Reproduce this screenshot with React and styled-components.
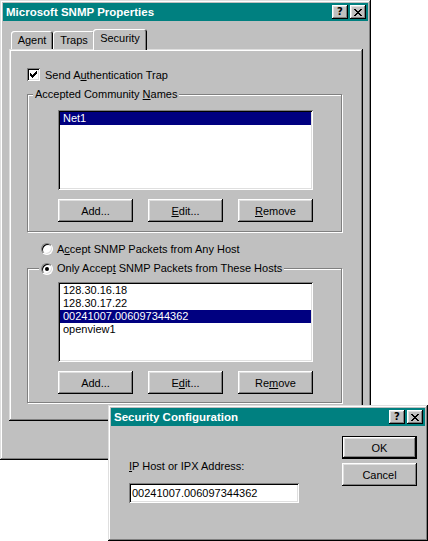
import React from 'react'
import styled, { createGlobalStyle } from 'styled-components'

const GlobalStyle = createGlobalStyle`
html, body {
  margin: 0;
  padding: 0;
  background: #fff;
}
body {
  font-family: "Liberation Sans", Arial, sans-serif;
  font-size: 11px;
  color: #000;
}
`

// win95 bevels
const raised = 'inset -1px -1px #000, inset 1px 1px #fff, inset -2px -2px #808080, inset 2px 2px #dfdfdf'
const frame = 'inset -1px -1px #000, inset 1px 1px #dfdfdf, inset -2px -2px #808080, inset 2px 2px #fff'
const sunken = 'inset 1px 1px #808080, inset -1px -1px #fff, inset 2px 2px #000, inset -2px -2px #dfdfdf'

const Desktop = styled.div`
position: relative;
width: 428px;
height: 541px;
overflow: hidden;
background: #fff;
`
const Window = styled.div`
box-sizing: border-box;
width: ${p => p.$w}px;
height: ${p => p.$h}px;
padding: 3px;
background: #c0c0c0;
box-shadow: ${frame};
display: flex;
flex-direction: column;
`
const Dialog = styled(Window)`
position: absolute;
left: ${p => p.$x}px;
top: ${p => p.$y}px;
z-index: 10;
`
const TitleBar = styled.div`
height: 18px;
flex: none;
display: flex;
align-items: center;
padding: 0 2px 0 3px;
background: #008080;
color: #fff;
font-weight: 700;
font-size: 11.5px;
`
const TitleText = styled.div`
flex: 1;
white-space: nowrap;
`
const TitleButton = styled.div`
width: 16px;
height: 14px;
margin-left: 2px;
background: #c0c0c0;
box-shadow: ${raised};
display: flex;
align-items: center;
justify-content: center;
color: #000;
font-family: "DejaVu Sans", "Liberation Sans", sans-serif;
font-weight: 700;
font-size: 10px;
line-height: 14px;
`
const Body = styled.div`
display: flex;
flex-direction: column;
padding: 8px 5px 0 6px;
`
const TabRow = styled.div`
display: flex;
align-items: flex-end;
height: 20px;
padding-left: 2px;
`
const Tab = styled.div`
box-sizing: border-box;
width: ${p => p.$w}px;
height: ${p => (p.$active ? 21 : 18)}px;
margin: ${p => (p.$active ? '0 -2px -1px -2px' : '0')};
padding-top: 3px;
position: relative;
z-index: ${p => (p.$active ? 2 : 0)};
text-align: center;
background: #c0c0c0;
border-radius: 3px 3px 0 0;
box-shadow: inset 1px 1px #fff, inset -1px 0 #000, inset -2px 0 #808080;
`
const Panel = styled.div`
box-sizing: border-box;
width: 354px;
height: 372px;
padding: 19px 0 0 18px;
background: #c0c0c0;
box-shadow: ${frame};
position: relative;
z-index: 1;
`
const OptionRow = styled.label`
display: flex;
align-items: center;
gap: ${p => p.$gap || 5}px;
height: 13px;
margin: ${p => p.$margin || '0'};
white-space: nowrap;
`
const CheckBox = styled.span`
box-sizing: border-box;
width: 13px;
height: 13px;
flex: none;
background: #fff;
box-shadow: ${sunken};
display: flex;
align-items: center;
justify-content: center;
`
const Radio = styled.span`
box-sizing: border-box;
width: 12px;
height: 12px;
flex: none;
border-radius: 50%;
border: 1px solid;
border-color: #808080 #fff #fff #808080;
background: #fff;
box-shadow: inset 1px 1px #000, inset -1px -1px #dfdfdf;
display: flex;
align-items: center;
justify-content: center;

&::after {
  content: "";
  width: 4px;
  height: 4px;
  border-radius: 50%;
  background: ${p => (p.$on ? '#000' : 'transparent')};
}
`
const Group = styled.fieldset`
box-sizing: border-box;
width: 315px;
margin: ${p => p.$margin || '0'};
padding: 0 0 ${p => p.$bottom}px 0;
border: 1px solid #808080;
box-shadow: inset 1px 1px #fff, 1px 1px #fff;
min-inline-size: 0;
`
const Legend = styled.legend`
margin-left: ${p => p.$indent}px;
padding: 0 2px;
height: 13px;
line-height: 13px;
background: #c0c0c0;
white-space: nowrap;
`
const GroupBody = styled.div`
display: flex;
flex-direction: column;
gap: 9px;
padding: ${p => p.$top}px 0 0 30px;
`
const ListBox = styled.div`
box-sizing: border-box;
width: 255px;
height: 80px;
padding: 2px;
background: #fff;
box-shadow: ${sunken};
`
const ListItem = styled.div`
height: 13px;
line-height: 13px;
padding-left: 3px;
white-space: nowrap;
background: ${p => (p.$selected ? '#000080' : 'transparent')};
color: ${p => (p.$selected ? '#fff' : '#000')};
`
const ButtonRow = styled.div`
display: flex;
gap: 15px;
`
const Button = styled.div`
box-sizing: border-box;
width: 75px;
height: 23px;
display: flex;
align-items: center;
justify-content: center;
background: #c0c0c0;
box-shadow: ${p => (p.$default
    ? 'inset 0 0 0 1px #000, inset -2px -2px #000, inset 2px 2px #fff, inset -3px -3px #808080, inset 3px 3px #dfdfdf'
    : raised)};
white-space: nowrap;
`
const Key = styled.u`
text-decoration: underline;
text-underline-offset: 1px;
`
const ConfigBody = styled.div`
display: flex;
padding: 10px 8px 0 18px;
`
const FieldColumn = styled.div`
flex: 1;
display: flex;
flex-direction: column;
padding-top: 24px;
`
const FieldLabel = styled.div`
height: 13px;
line-height: 13px;
`
const TextField = styled.div`
box-sizing: border-box;
width: 170px;
height: 20px;
margin-top: 10px;
padding-left: 3px;
line-height: 20px;
background: #fff;
box-shadow: ${sunken};
`
const ButtonColumn = styled.div`
display: flex;
flex-direction: column;
gap: 4px;
`

const CloseIcon = () => (
  <svg width="8" height="7" viewBox="0 0 8 7" shapeRendering="crispEdges">
    <path d="M0 0h2v1h1v1h2V1h1V0h2v1H7v1H6v1H5v1h1v1h1v1h1v1H6V6H5V5H3v1H2v1H0V6h1V5h1V4h1V3H2V2H1V1H0z" fill="#000" />
  </svg>
)

const CheckMark = () => (
  <svg width="7" height="7" viewBox="0 0 7 7" shapeRendering="crispEdges">
    <path d="M6 0h1v3H6v1H5v1H4v1H3v1H2V6H1V5H0V2h1v1h1v1h1V3h1V2h1V1h1z" fill="#000" />
  </svg>
)

const TitleButtons = () => (
  <>
    <TitleButton>?</TitleButton>
    <TitleButton><CloseIcon /></TitleButton>
  </>
)

const hosts = ['128.30.16.18', '128.30.17.22', '00241007.006097344362', 'openview1']

export default function App() {
  return (
    <Desktop>
      <GlobalStyle />
      <Window $w={371} $h={460}>
        <TitleBar>
          <TitleText>Microsoft SNMP Properties</TitleText>
          <TitleButtons />
        </TitleBar>
        <Body>
          <TabRow>
            <Tab $w={42}>Agent</Tab>
            <Tab $w={42}>Traps</Tab>
            <Tab $w={54} $active>Security</Tab>
          </TabRow>
          <Panel>
            <OptionRow>
              <CheckBox><CheckMark /></CheckBox>
              <span>Send A<Key>u</Key>thentication Trap</span>
            </OptionRow>

            <Group $margin="7px 0 0 0" $bottom={9}>
              <Legend $indent={5}>Accepted Community <Key>N</Key>ames</Legend>
              <GroupBody $top={9}>
                <ListBox>
                  <ListItem $selected>Net1</ListItem>
                </ListBox>
                <ButtonRow>
                  <Button>Add...</Button>
                  <Button><span><Key>E</Key>dit...</span></Button>
                  <Button><span><Key>R</Key>emove</span></Button>
                </ButtonRow>
              </GroupBody>
            </Group>

            <OptionRow $gap={4} $margin="10px 0 0 14px">
              <Radio />
              <span>A<Key>c</Key>cept SNMP Packets from Any Host</span>
            </OptionRow>

            <Group $margin="7px 0 0 0" $bottom={8}>
              <Legend $indent={11}>
                <OptionRow $gap={4}>
                  <Radio $on />
                  <span>Only Accep<Key>t</Key> SNMP Packets from These Hosts</span>
                </OptionRow>
              </Legend>
              <GroupBody $top={7}>
                <ListBox>
                  {hosts.map((h, i) => (
                    <ListItem key={h} $selected={i === 2}>{h}</ListItem>
                  ))}
                </ListBox>
                <ButtonRow>
                  <Button>Add...</Button>
                  <Button><span>E<Key>d</Key>it...</span></Button>
                  <Button><span>Re<Key>m</Key>ove</span></Button>
                </ButtonRow>
              </GroupBody>
            </Group>
          </Panel>
        </Body>
      </Window>

      <Dialog $x={108} $y={405} $w={320} $h={136}>
        <TitleBar>
          <TitleText>Security Configuration</TitleText>
          <TitleButtons />
        </TitleBar>
        <ConfigBody>
          <FieldColumn>
            <FieldLabel><Key>I</Key>P Host or IPX Address:</FieldLabel>
            <TextField>00241007.006097344362</TextField>
          </FieldColumn>
          <ButtonColumn>
            <Button $default>OK</Button>
            <Button>Cancel</Button>
          </ButtonColumn>
        </ConfigBody>
      </Dialog>
    </Desktop>
  )
}
